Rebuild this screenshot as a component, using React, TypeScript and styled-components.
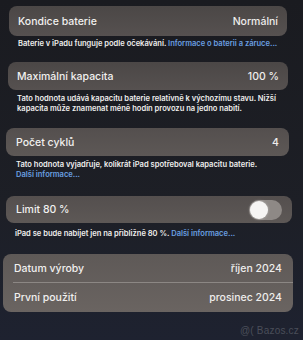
import styled, { createGlobalStyle } from "styled-components";

const GlobalStyle = createGlobalStyle`
  html, body {
    margin: 0;
    padding: 0;
    background: #1c1e24;
  }
  body {
    font-family: Inter, "Liberation Sans", sans-serif;
    -webkit-font-smoothing: antialiased;
  }
`;

const Screen = styled.div`
  position: relative;
  width: 303px;
  height: 340px;
  overflow: hidden;
  box-sizing: border-box;
  padding-top: 6px;
  background: linear-gradient(180deg, #1a1b20 0%, #1d1f26 60%, #1e2230 100%);
`;

const Section = styled.section<{ $left: number; $right: number; $gap: number }>`
  margin: 0 ${(p) => 303 - p.$right}px ${(p) => p.$gap}px ${(p) => p.$left}px;
`;

const Card = styled.div<{ $tone: "dark" | "mid" | "light" }>`
  border-radius: 8px;
  overflow: hidden;
  background: ${(p) =>
    p.$tone === "dark"
      ? "linear-gradient(180deg, #4b4746 0%, #565150 100%)"
      : p.$tone === "mid"
      ? "linear-gradient(180deg, #544f4e 0%, #5d5856 100%)"
      : "linear-gradient(180deg, #5e5957 0%, #6a6461 100%)"};
`;

const Row = styled.div<{ $h: number; $pad: number }>`
  display: flex;
  align-items: center;
  justify-content: space-between;
  height: ${(p) => p.$h}px;
  padding: 0 ${(p) => p.$pad}px;
  color: #f1f0ef;
  font-size: 10.5px;
  font-weight: 500;
`;

const Divider = styled.div`
  height: 1px;
  margin-left: 10px;
  background: #8c8784;
`;

const Value = styled.span`
  color: #eeedec;
`;

const Footer = styled.p<{ $indent: number; $top: number }>`
  margin: ${(p) => p.$top}px 6px 0 ${(p) => p.$indent}px;
  color: #efeeed;
  font-size: 7.55px;
  font-weight: 600;
  line-height: 10px;
`;

const Link = styled.span`
  color: #6a9fe0;
`;

const Toggle = styled.div`
  position: relative;
  width: 33px;
  height: 20px;
  border-radius: 10px;
  background: #8e8986;
`;

const Knob = styled.div`
  position: absolute;
  left: 1px;
  top: 1px;
  width: 18px;
  height: 18px;
  border-radius: 50%;
  background: #f6f5f4;
  box-shadow: 0 0 3px rgba(255, 255, 255, 0.4);
`;

const Watermark = styled.div`
  position: absolute;
  right: 4px;
  bottom: 4px;
  color: #4a4e59;
  font-family: "Liberation Sans", sans-serif;
  font-size: 10px;
  letter-spacing: 0.2px;
`;

export default function App() {
  return (
    <Screen>
      <GlobalStyle />

      <Section $left={9} $right={287} $gap={13}>
        <Card $tone="dark">
          <Row $h={30} $pad={9}>
            <span>Kondice baterie</span>
            <Value>Normální</Value>
          </Row>
        </Card>
        <Footer $indent={9} $top={3}>
          Baterie v iPadu funguje podle očekávání.{" "}
          <Link>Informace o baterii a záruce...</Link>
        </Footer>
      </Section>

      <Section $left={8} $right={288} $gap={14}>
        <Card $tone="dark">
          <Row $h={28} $pad={9}>
            <span>Maximální kapacita</span>
            <Value>100 %</Value>
          </Row>
        </Card>
        <Footer $indent={9} $top={4}>
          Tato hodnota udává kapacitu baterie relativně k výchozímu stavu. Nižší
          kapacita může znamenat méně hodin provozu na jedno nabití.
        </Footer>
      </Section>

      <Section $left={6} $right={289} $gap={16}>
        <Card $tone="mid">
          <Row $h={28} $pad={10}>
            <span>Počet cyklů</span>
            <Value>4</Value>
          </Row>
        </Card>
        <Footer $indent={10} $top={4}>
          Tato hodnota vyjadřuje, kolikrát iPad spotřeboval kapacitu baterie.
          <br />
          <Link>Další informace...</Link>
        </Footer>
      </Section>

      <Section $left={6} $right={292} $gap={15}>
        <Card $tone="mid">
          <Row $h={27} $pad={10}>
            <span>Limit 80 %</span>
            <Toggle>
              <Knob />
            </Toggle>
          </Row>
        </Card>
        <Footer $indent={9} $top={6}>
          iPad se bude nabíjet jen na přibližně 80 %.{" "}
          <Link>Další informace...</Link>
        </Footer>
      </Section>

      <Section $left={3} $right={293} $gap={0}>
        <Card $tone="light">
          <Row $h={28} $pad={11}>
            <span>Datum výroby</span>
            <Value>říjen 2024</Value>
          </Row>
          <Divider />
          <Row $h={29} $pad={11}>
            <span>První použití</span>
            <Value>prosinec 2024</Value>
          </Row>
        </Card>
      </Section>

      <Watermark>@( Bazos.cz</Watermark>
    </Screen>
  );
}
